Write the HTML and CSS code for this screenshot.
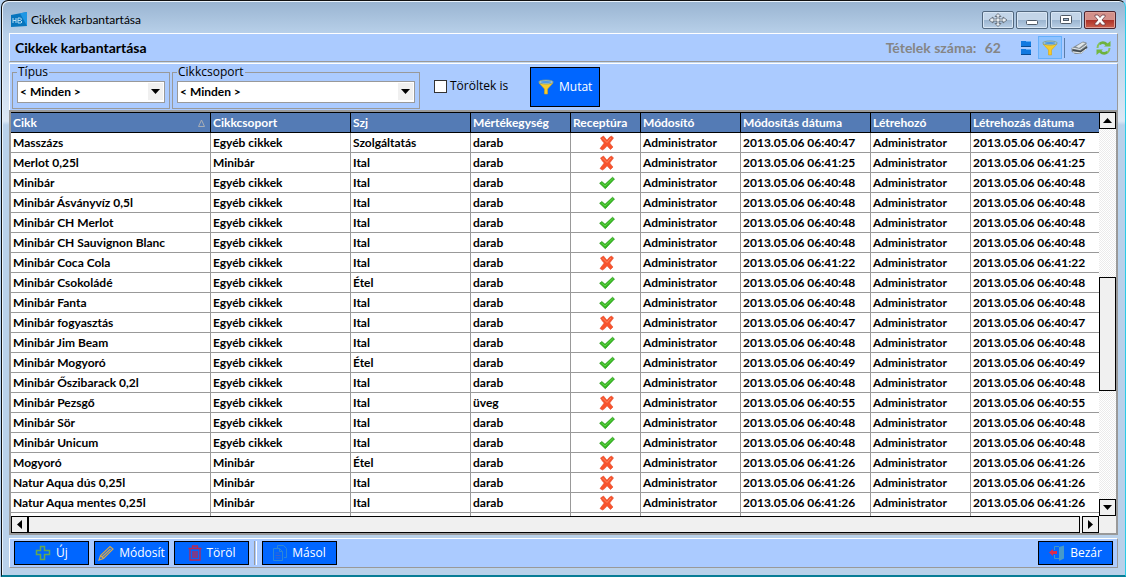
FILE: index.html
```html
<!DOCTYPE html>
<html lang="hu">
<head>
<meta charset="utf-8">
<title>Cikkek karbantartása</title>
<link rel="stylesheet" href="styles.css">
</head>
<body>
<svg class="defs" aria-hidden="true">
  <symbol id="funnel" viewBox="0 0 16 16"><path d="M1 4 6.500 10v5h3v-5L15 4z" fill="#f7cb2a" stroke="#d9a514" stroke-width=".6"/><ellipse cx="8" cy="3" rx="7.300" ry="2" fill="#a6c8d8" stroke="#7b9a86" stroke-width=".8"/><ellipse cx="8" cy="3" rx="5.200" ry="1" fill="#4b98e8"/></symbol>
  <symbol id="cross" viewBox="0 0 16 16"><path d="M1.500 3 4.500 1Q6 3 8 5.300 10 2 12.500 1L14.500 3 10.700 8Q12.500 10.500 14 12l-2.500 2.500L8 10.800Q6 14 3.500 15L1 13.500 5.200 8Q3 6 1.500 3z" fill="#f8532c" stroke="#e04a2c" stroke-width=".6"/><path d="M3.500 3l4.500 4.500L12 3" fill="none" stroke="#ff8a63"/></symbol>
  <symbol id="check" viewBox="0 0 16 16"><path d="M.6 8.300 2.800 6.500 6 9.300 13.500 2.300 15.500 4 6.300 13.700z" fill="#37b822" stroke="#249a18" stroke-width=".7"/><path d="M2.500 8 6 11l8-7.500" fill="none" stroke="#6ddb50" stroke-width=".8"/></symbol>
</svg>
<main class="window">
  <header class="titlebar">
    <svg class="logo" viewBox="0 0 16 16"><path d="M0 3 16 0v14L0 15z" fill="#0875bd"/><path d="M9 1.300 16 0v14z" fill="#1d97e5"/><path d="M2 6v5M5 6v5M2 8.500h3M7 6v5M7 6h2.500l1 1-1 1.500H7M7 11h3l1-1-1.500-1.500" fill="none" stroke="#b4dcf3"/></svg>
    <h1 class="caption">Cikkek karbantartása</h1>
    <div class="window-buttons">
      <button class="wbtn" aria-label="Mozgatás"><svg width="20" height="14" viewBox="0 0 20 14"><path d="m10 .5 3 3h-2V6h4V4l4 3-4 3V8h-4v2.500h2l-3 3-3-3h2V8H5v2L1 7l4-3v2h4V3.500H7z" fill="#e8edf2" stroke="#59626d" stroke-width=".8"/></svg></button>
      <button class="wbtn" aria-label="Kis méret"><svg width="12" height="14"><rect x=".5" y="7.500" width="11" height="4" rx="1" fill="#fff" stroke="#4e5966"/></svg></button>
      <button class="wbtn" aria-label="Teljes méret"><svg width="12" height="14"><rect x=".5" y="2.500" width="11" height="8" rx="1" fill="#fff" stroke="#4e5966"/><rect x="3.500" y="5.500" width="5" height="2" fill="#9db6d0" stroke="#4e5966"/></svg></button>
      <button class="wbtn wbtn-close" aria-label="Bezárás"><svg width="12" height="12" viewBox="0 0 12 12"><path d="M1 1h3l2 2.500L8 1h3v1.500L8 6l3 3.500V11H8L6 8.500 4 11H1V9.500L4 6 1 2.500z" fill="#fff" stroke="#6d3b42" stroke-width=".8"/></svg></button>
    </div>
  </header>
  <section class="heading">
    <h2 class="heading-title">Cikkek karbantartása</h2>
    <p class="count">Tételek száma: <span>62</span></p>
    <div class="tools">
      <button class="tool" aria-label="Lista"><svg width="12" height="16"><rect x="1" y="1" width="10" height="6" fill="#1179e0"/><rect x="1" y="9" width="10" height="6" fill="#1179e0"/><path d="M1 6.500h10M1 14.500h10" stroke="#084b93"/><path d="M6 1.500h5M6 9.500h5" stroke="#58a8f5"/></svg></button>
      <button class="tool tool-on" aria-label="Szűrő"><svg width="16" height="16"><use href="#funnel"/></svg></button>
      <span class="tool-line"></span>
      <button class="tool" aria-label="Nyomtatás"><svg width="17" height="14" viewBox="0 0 17 14"><path d="m4 5 8-4.500 3.500 1L16.500 7 10 13H4L.5 10.500V7z" fill="#858e94"/><path d="m5 5.500 6.500-4 3 .5L8 7z" fill="#dfe5e8"/><path d="m1 7 8 1.500 7-5M2 11l8 1 5-4" fill="none" stroke="#e4e9ec"/><path d="m1.500 9 8 1.500L16 6" fill="none" stroke="#3f484e" stroke-width="1.300"/></svg></button>
      <button class="tool" aria-label="Frissítés"><svg width="17" height="16" viewBox="0 0 17 16"><path d="M4.500 4Q8 1 12 4.500" fill="none" stroke="#6db13e" stroke-width="2.600"/><path d="M12.500 12Q9 15 5 11.500" fill="none" stroke="#6db13e" stroke-width="2.600"/><path d="M14.500 8q0 3-2 4.500M2.500 8q0-3 2-4.500" fill="none" stroke="#86c35a" stroke-width="2"/><path d="M9 6.500h6.500V1zM8 9.500H1.500V15z" fill="#72b840"/></svg></button>
    </div>
  </section>
  <form class="filters">
    <fieldset class="group group-type"><legend><label for="type">Típus</label></legend>
      <div class="combo"><select id="type"><option>&lt; Minden &gt;</option></select><svg class="arrow" width="15" height="17"><path d="M3 6h9L7.500 11z"/></svg></div></fieldset>
    <fieldset class="group group-category"><legend><label for="category">Cikkcsoport</label></legend>
      <div class="combo"><select id="category"><option>&lt; Minden &gt;</option></select><svg class="arrow" width="15" height="17"><path d="M3 6h9L7.500 11z"/></svg></div></fieldset>
    <label class="deleted"><input type="checkbox">Töröltek is</label>
    <button type="button" class="btn btn-show"><svg width="16" height="16"><use href="#funnel"/></svg>Mutat</button>
  </form>
  <section class="grid">
    <div class="viewport">
      <table>
        <colgroup><col class="c200"><col class="c140"><col class="c120"><col class="c100"><col class="c70"><col class="c100"><col class="c130"><col class="c100"><col></colgroup>
        <thead><tr><th><span class="sorted">Cikk<svg width="7" height="8"><path d="M3.500 1 6.500 7.500h-6z" fill="none" stroke="#a9aeb5"/></svg></span></th><th>Cikkcsoport</th><th>Szj</th><th>Mértékegység</th><th>Receptúra</th><th>Módosító</th><th>Módosítás dátuma</th><th>Létrehozó</th><th>Létrehozás dátuma</th></tr></thead>
        <tbody id="rows"></tbody>
      </table>
    </div>
    <div class="vscroll"><button class="sbtn" aria-label="Fel"><svg width="9" height="5"><path d="M0 5h9L4.500 0z"/></svg></button><div class="vtrack"><div class="before"></div><div class="vthumb"></div><div class="after"></div></div><button class="sbtn" aria-label="Le"><svg width="9" height="5"><path d="M0 0h9L4.500 5z"/></svg></button></div>
    <div class="hscroll"><button class="sbtn" aria-label="Balra"><svg width="5" height="9"><path d="M5 0v9L0 4.500z"/></svg></button><div class="hthumb"></div><button class="sbtn" aria-label="Jobbra"><svg width="5" height="9"><path d="M0 0v9l5-4.500z"/></svg></button></div>
  </section>
  <footer class="actions">
    <button class="btn"><svg width="16" height="16"><path d="M5.500 1.500h4v4h5v4h-5v5h-4v-5h-4v-4h4z" fill="none" stroke="#65a852" stroke-width="1.500"/></svg>Új</button>
    <button class="btn"><svg width="16" height="16"><path d="M1 15 2.500 10.500 12 1.500 15 4 5.500 13.500zM2.500 10.500l3 3M4.500 11.500l8-7.500" fill="none" stroke="#d8a94b" stroke-width="1.200"/></svg>Módosít</button>
    <button class="btn"><svg width="14" height="16"><path d="M.5 3.500h13M4.500 3V1h5v2M2 4v11h10V4M5 6v7M7 6v7M9 6v7" fill="none" stroke="#bd2750" stroke-width="1.300"/></svg>Töröl</button>
    <span class="split"></span>
    <button class="btn"><svg width="14" height="16"><path d="M4.500 3V.5h6l3 3v9H11M.5 3.500h6l3 3v9h-9zM6.500 3.500v3h3" fill="none" stroke="#2d86d6"/><path d="M2.500 8h4M2.500 10.500h5M2.500 13h5" stroke="#3c62cc"/></svg>Másol</button>
    <button class="btn btn-close"><svg width="16" height="16"><path d="M5.500 5V1.500H10M5.500 10v3.500H10" fill="none" stroke="#3f94ca"/><path d="m10 2 5-1.500v13L10 16z" fill="#4799c9"/><path d="M0 7.500 4 4v2h4v3H4v2z" fill="#d92c4c"/></svg>Bezár</button>
  </footer>
</main>
<script src="script.js"></script>
</body>
</html>
```
FILE: styles.css
```css
* { box-sizing: border-box; }
body { margin: 0; background: #b5d2f2; font: 12px/16px "Open Sans", "Noto Sans", sans-serif; color: #000; }
button, select, input { font: inherit; color: inherit; margin: 0; }
h1, h2, p { margin: 0; }
svg { flex: none; }
.defs { display: none; }
.window { height: 100vh; display: flex; flex-direction: column; margin-left: 1px; padding: 2px 7px 7px; border: 1px solid #111; border-right-color: #29cbe6; border-bottom: 2px solid #087d96; border-radius: 7px 7px 0 0; box-shadow: inset 1px 1px #e9f3fc; background: linear-gradient(#99b4d1, #b9d1ea 34px, #dce8f5 120px, #b9d1ea 124px); }
.titlebar { height: 30px; flex: none; display: flex; align-items: center; padding: 4px 2px 0; gap: 4px; }
.logo { width: 16px; height: 16px; }
.caption { flex: 1; font: 400 12px/16px Lato, "Open Sans", sans-serif; }
.window-buttons { display: flex; gap: 2px; }
.wbtn { width: 32px; height: 18px; padding: 0; border: 1px solid #52687f; border-radius: 2px; box-shadow: inset 0 0 0 1px #d8e6f4; background: linear-gradient(#c3d5e8 48%, #9bb5d0 52%, #bad0e6); display: flex; align-items: center; justify-content: center; }
.wbtn-close { border-color: #4d2530; box-shadow: inset 0 0 0 1px #dfa29a; background: linear-gradient(#d3908a 48%, #ad3228 52%, #cc604d); }
.heading { height: 29px; flex: none; display: flex; align-items: center; padding: 0 2px 0 5px; background: #abcbff; border: 1px solid #fff; border-right-color: #999; border-bottom-color: #999; }
.heading-title { flex: 1; font: 700 14px/16px Lato, "Open Sans", sans-serif; }
.count { font: 700 14px/16px Lato, "Open Sans", sans-serif; color: #858585; }
.count span { margin-left: 5px; }
.tools { display: flex; align-items: center; margin-left: 13px; }
.tool { width: 24px; height: 23px; padding: 0; border: 1px solid transparent; background: none; display: flex; align-items: center; justify-content: center; }
.tool-on { background: #8ec2ff; border-color: #66b0fa; }
.tool-line { width: 1px; height: 20px; background: #5b7da8; margin: 0 2px; }
.filters { height: 47px; flex: none; margin: 1px 0 0; display: flex; align-items: flex-start; padding: 1px 2px; background: #abcbff; border-top: 1px solid #fff; border-left: 1px solid #fff; border-right: 1px solid #999; }
.group { position: relative; height: 44px; min-width: 0; margin: 0 2px 0 0; padding: 0 4px; border: 1px solid #999; }
.group legend { padding: 0 1px; height: 14px; line-height: 14px; }
.group-type { width: 158px; }
.group-category { width: 248px; }
.combo { position: relative; height: 22px; margin-top: 2px; }
.combo select { appearance: none; width: 100%; height: 22px; padding: 0 18px 0 2px; border: 1px solid #999; border-radius: 0; background: #fff; font: 700 12px/16px Lato, "Open Sans", sans-serif; }
.arrow { position: absolute; right: 2px; top: 2px; background: #f0f0f0; pointer-events: none; }
.deleted { display: flex; align-items: center; gap: 3px; margin: 13px 22px 0 12px; }
.deleted input { appearance: none; width: 13px; height: 13px; border: 1px solid #333; background: #fff; }
.btn { width: 75px; height: 24px; padding: 0; border: 1px solid #000; background: #06f; color: #fff; display: flex; align-items: center; justify-content: center; gap: 5px; }
.btn-show { width: 70px; height: 40px; margin-top: 2px; }
.grid { flex: 1; min-height: 0; display: grid; grid-template: minmax(0, 1fr) 17px / minmax(0, 1fr) 17px; background: #f0f0f0; border: 2px solid #999; }
.viewport { overflow: hidden; background: #fff; }
table { width: 100%; table-layout: fixed; border-collapse: separate; border-spacing: 0; font: 700 12px/16px Lato, "Open Sans", sans-serif; }
th, td { height: 20px; padding: 0 0 0 2px; text-align: left; white-space: nowrap; overflow: hidden; border-right: 1px solid #999; border-bottom: 1px solid #999; }
th { height: 21px; background: #547bb5; color: #fff; border-top: 1px solid #000; border-color: #000; }
th:last-child, td:last-child { border-right: 0; }
td svg { display: block; margin: 0 auto; }
.sorted { display: flex; justify-content: space-between; align-items: center; padding-right: 5px; }
.c200 { width: 200px; } .c140 { width: 140px; } .c130 { width: 130px; } .c120 { width: 120px; } .c100 { width: 100px; } .c70 { width: 70px; }
.sbtn { width: 17px; height: 17px; padding: 0; flex: none; border: 1px solid #000; background: #f0f0f0; display: flex; align-items: center; justify-content: center; }
.vscroll { display: flex; flex-direction: column; }
.vtrack { flex: 1; display: flex; flex-direction: column; background: repeating-conic-gradient(#fff 0 25%, #ebebeb 0 50%) 0 0 / 2px 2px; }
.before { flex: 149; } .after { flex: 109; }
.vthumb { flex: 113; border: 1px solid #000; background: #f0f0f0; }
.hscroll { display: flex; }
.hthumb { flex: 1; margin-right: 2px; border: 1px solid #000; background: #f0f0f0; }
.actions { height: 30px; flex: none; margin-top: 3px; display: flex; align-items: center; gap: 5px; padding: 0 4px; background: #abcbff; border: 1px solid #fff; border-right-color: #999; border-bottom-color: #999; }
.split { width: 3px; height: 24px; border-left: 1px solid #999; border-right: 1px solid #fff; }
.btn-close { margin-left: auto; }
```
FILE: script.js
```js
const rows = [
  ["Masszázs", "Egyéb cikkek", "Szolgáltatás", "darab", 0, "40:47"],
  ["Merlot 0,25l", "Minibár", "Ital", "darab", 0, "41:25"],
  ["Minibár", "Egyéb cikkek", "Ital", "darab", 1, "40:48"],
  ["Minibár Ásványvíz 0,5l", "Egyéb cikkek", "Ital", "darab", 1, "40:48"],
  ["Minibár CH Merlot", "Egyéb cikkek", "Ital", "darab", 1, "40:48"],
  ["Minibár CH Sauvignon Blanc", "Egyéb cikkek", "Ital", "darab", 1, "40:48"],
  ["Minibár Coca Cola", "Egyéb cikkek", "Ital", "darab", 0, "41:22"],
  ["Minibár Csokoládé", "Egyéb cikkek", "Étel", "darab", 1, "40:48"],
  ["Minibár Fanta", "Egyéb cikkek", "Ital", "darab", 1, "40:48"],
  ["Minibár fogyasztás", "Egyéb cikkek", "Ital", "darab", 0, "40:47"],
  ["Minibár Jim Beam", "Egyéb cikkek", "Ital", "darab", 1, "40:48"],
  ["Minibár Mogyoró", "Egyéb cikkek", "Étel", "darab", 1, "40:49"],
  ["Minibár Őszibarack 0,2l", "Egyéb cikkek", "Ital", "darab", 1, "40:48"],
  ["Minibár Pezsgő", "Egyéb cikkek", "Ital", "üveg", 0, "40:55"],
  ["Minibár Sör", "Egyéb cikkek", "Ital", "darab", 1, "40:48"],
  ["Minibár Unicum", "Egyéb cikkek", "Ital", "darab", 1, "40:48"],
  ["Mogyoró", "Minibár", "Étel", "darab", 0, "41:26"],
  ["Natur Aqua dús 0,25l", "Minibár", "Ital", "darab", 0, "41:26"],
  ["Natur Aqua mentes 0,25l", "Minibár", "Ital", "darab", 0, "41:26"],
  ["", "", "", "", null, ""]
];
document.getElementById("rows").innerHTML = rows.map(([name, group, szj, unit, recipe, time]) => {
  const icon = recipe === null ? "" : `<svg width="16" height="16"><use href="#${recipe ? "check" : "cross"}"/></svg>`;
  const date = time && `2013.05.06 06:${time}`;
  const user = time && "Administrator";
  return "<tr>" + [name, group, szj, unit, icon, user, date, user, date].map(v => `<td>${v}</td>`).join("") + "</tr>";
}).join("");
```
